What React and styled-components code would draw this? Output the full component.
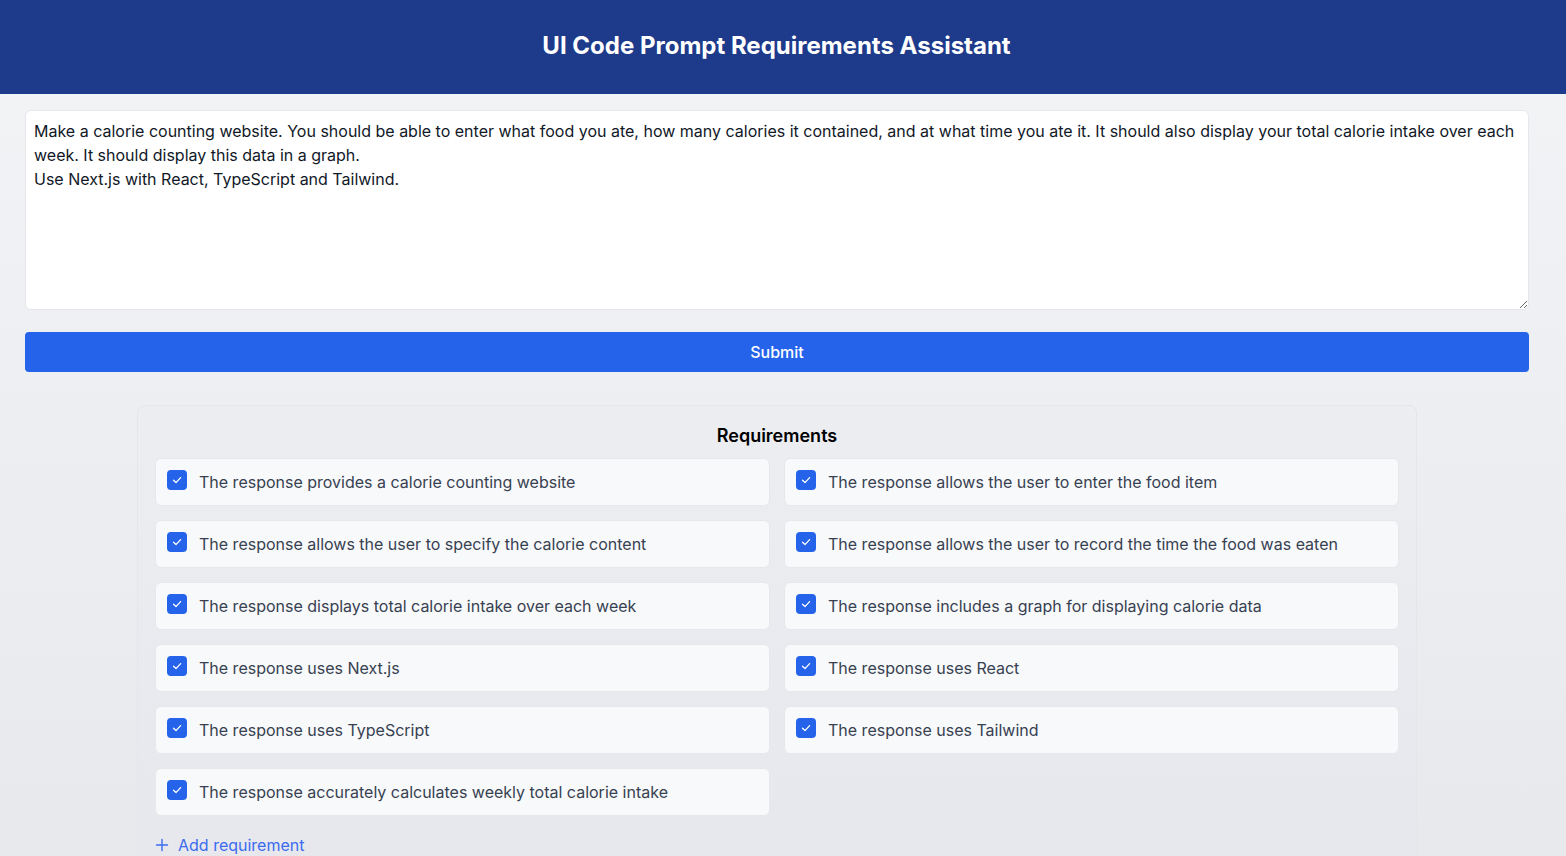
import React, { useState } from "react";
import styled, { createGlobalStyle } from "styled-components";

const GlobalStyle = createGlobalStyle`
  html, body {
    margin: 0;
    padding: 0;
  }
  body {
    font-family: Inter, "Noto Sans", sans-serif;
    background: linear-gradient(to bottom, #f3f4f6, #e7e8ec);
    min-height: 100vh;
    color: #111827;
  }
`;

const StyledPage = styled.div`
  min-height: 100vh;
  padding-right: 13px;
`;

const StyledHeader = styled.header`
  background: #1e3a8a;
  height: 94px;
  margin-right: -13px;
  padding-right: 13px;
  display: flex;
  align-items: center;
  justify-content: center;
  h1 {
    margin: 0 0 2px;
    color: #ffffff;
    font-size: 24px;
    font-weight: 700;
    line-height: 32px;
  }
`;

const StyledMain = styled.main`
  padding: 16px 24px 0 25px;
  display: flex;
  flex-direction: column;
`;

const StyledPrompt = styled.textarea`
  box-sizing: border-box;
  width: 100%;
  height: 200px;
  padding: 8px;
  border: 1px solid #e5e7eb;
  border-radius: 6px;
  background: #ffffff;
  font-family: Inter, "Noto Sans", sans-serif;
  font-size: 16px;
  line-height: 24px;
  color: #111827;
  resize: vertical;
  outline: none;
`;

const StyledSubmit = styled.button`
  margin-top: 22px;
  height: 40px;
  width: 100%;
  border: none;
  border-radius: 4px;
  background: #2563eb;
  color: #ffffff;
  font-family: Inter, "Noto Sans", sans-serif;
  font-size: 16px;
  font-weight: 500;
  cursor: pointer;
`;

const StyledPanel = styled.section`
  box-sizing: border-box;
  width: 1280px;
  margin: 33px auto 0;
  padding: 16px 17px 40px;
  border: 1px solid #e4e6ea;
  border-radius: 8px;
  background: rgba(229, 231, 235, 0.12);
  h2 {
    margin: 0 0 8px;
    text-align: center;
    font-size: 18px;
    font-weight: 600;
    line-height: 28px;
    color: #000000;
  }
`;

const StyledGrid = styled.div`
  display: grid;
  grid-template-columns: 1fr 1fr;
  gap: 14px;
`;

const StyledItem = styled.label`
  box-sizing: border-box;
  height: 48px;
  display: flex;
  align-items: center;
  gap: 12px;
  padding: 0 11px;
  border: 1px solid #e6e8ec;
  border-radius: 6px;
  background: #f8f9fb;
  font-size: 16px;
  color: #374151;
  cursor: pointer;
`;

const StyledBox = styled.span`
  flex: none;
  width: 20px;
  height: 20px;
  margin-top: -4px;
  border-radius: 4px;
  background: ${(p) => (p.$checked ? "#2563eb" : "#ffffff")};
  border: ${(p) => (p.$checked ? "none" : "1px solid #9ca3af")};
  display: flex;
  align-items: center;
  justify-content: center;
`;

const StyledAdd = styled.button`
  margin-top: 19px;
  display: flex;
  align-items: center;
  gap: 9px;
  padding: 0;
  border: none;
  background: none;
  color: #3b6cf0;
  font-family: Inter, "Noto Sans", sans-serif;
  font-size: 16px;
  cursor: pointer;
`;

const requirements = [
  "The response provides a calorie counting website",
  "The response allows the user to enter the food item",
  "The response allows the user to specify the calorie content",
  "The response allows the user to record the time the food was eaten",
  "The response displays total calorie intake over each week",
  "The response includes a graph for displaying calorie data",
  "The response uses Next.js",
  "The response uses React",
  "The response uses TypeScript",
  "The response uses Tailwind",
  "The response accurately calculates weekly total calorie intake",
];

const prompt =
  "Make a calorie counting website. You should be able to enter what food you ate, how many calories it contained, and at what time you ate it. It should also display your total calorie intake over each week. It should display this data in a graph.\nUse Next.js with React, TypeScript and Tailwind.";

const Check = () => (
  <svg width="12" height="12" viewBox="0 0 12 12" fill="none">
    <path
      d="M2.5 6.3 L5 8.6 L9.6 3.6"
      stroke="#ffffff"
      strokeWidth="1.3"
      strokeLinecap="round"
      strokeLinejoin="round"
    />
  </svg>
);

const Plus = () => (
  <svg width="14" height="14" viewBox="0 0 14 14" fill="none">
    <path d="M7 1.5v11M1.5 7h11" stroke="#3b6cf0" strokeWidth="1.4" strokeLinecap="round" />
  </svg>
);

const App = () => {
  const [text, setText] = useState(prompt);
  const [checked, setChecked] = useState(requirements.map(() => true));

  const toggle = (i) => {
    setChecked((prev) => prev.map((v, j) => (j === i ? !v : v)));
  };

  return (
    <StyledPage>
      <GlobalStyle />
      <StyledHeader>
        <h1>UI Code Prompt Requirements Assistant</h1>
      </StyledHeader>
      <StyledMain>
        <StyledPrompt value={text} onChange={(e) => setText(e.target.value)} />
        <StyledSubmit>Submit</StyledSubmit>
        <StyledPanel>
          <h2>Requirements</h2>
          <StyledGrid>
            {requirements.map((req, i) => (
              <StyledItem key={req} onClick={() => toggle(i)}>
                <StyledBox $checked={checked[i]}>{checked[i] && <Check />}</StyledBox>
                <span>{req}</span>
              </StyledItem>
            ))}
          </StyledGrid>
          <StyledAdd>
            <Plus />
            Add requirement
          </StyledAdd>
        </StyledPanel>
      </StyledMain>
    </StyledPage>
  );
};

export default App;
